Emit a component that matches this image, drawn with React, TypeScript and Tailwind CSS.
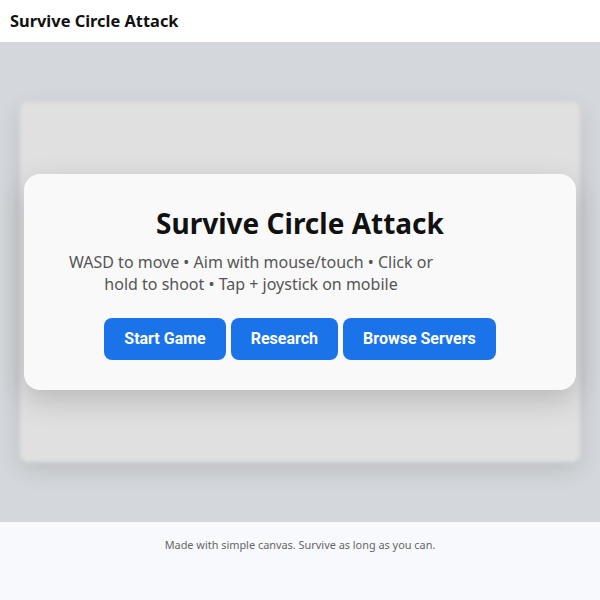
export default function App() {
  return (
    <div className="flex h-[600px] flex-col bg-[#d4d7db]" style={{ fontFamily: '"Noto Sans", "Open Sans", sans-serif' }}>
      <header className="flex h-[42px] items-center bg-white px-[10px]">
        <h1 className="text-[16.4px] font-bold text-[#111]">Survive Circle Attack</h1>
      </header>

      <main className="flex h-[480px] items-center justify-center px-5">
        <div className="relative h-[360px] w-full">
          <div className="h-full w-full rounded-lg bg-[#e0e0e0] shadow-[0_8px_24px_rgba(0,0,0,0.12)] blur-[2px]" />
          <div className="absolute inset-0 flex items-center justify-center">
            <div className="w-[552px] rounded-2xl bg-[#f9f9f9] px-8 pb-[30px] pt-8 shadow-[0_10px_30px_rgba(0,0,0,0.18)]">
              <h2 className="text-center text-[28px] font-bold leading-[34px] text-[#111]">Survive Circle Attack</h2>
              <p className="mt-[11px] max-w-[390px] text-center text-[16px] leading-[22px] text-[#555]">
                WASD to move • Aim with mouse/touch • Click or hold to shoot • Tap + joystick on mobile
              </p>
              <div className="mt-[23px] flex justify-center gap-[5px]" style={{ fontFamily: 'Roboto, sans-serif' }}>
                <button className="h-[42px] rounded-lg bg-[#1a73e8] px-5 text-[16px] font-bold text-white">Start Game</button>
                <button className="h-[42px] rounded-lg bg-[#1a73e8] px-5 text-[16px] font-bold text-white">Research</button>
                <button className="h-[42px] rounded-lg bg-[#1a73e8] px-5 text-[16px] font-bold text-white">Browse Servers</button>
              </div>
            </div>
          </div>
        </div>
      </main>

      <footer className="flex h-[78px] justify-center bg-[#f8f9fc] pt-[16px]">
        <p className="text-[10.9px] leading-[14px] text-[#666]">Made with simple canvas. Survive as long as you can.</p>
      </footer>
    </div>
  );
}
